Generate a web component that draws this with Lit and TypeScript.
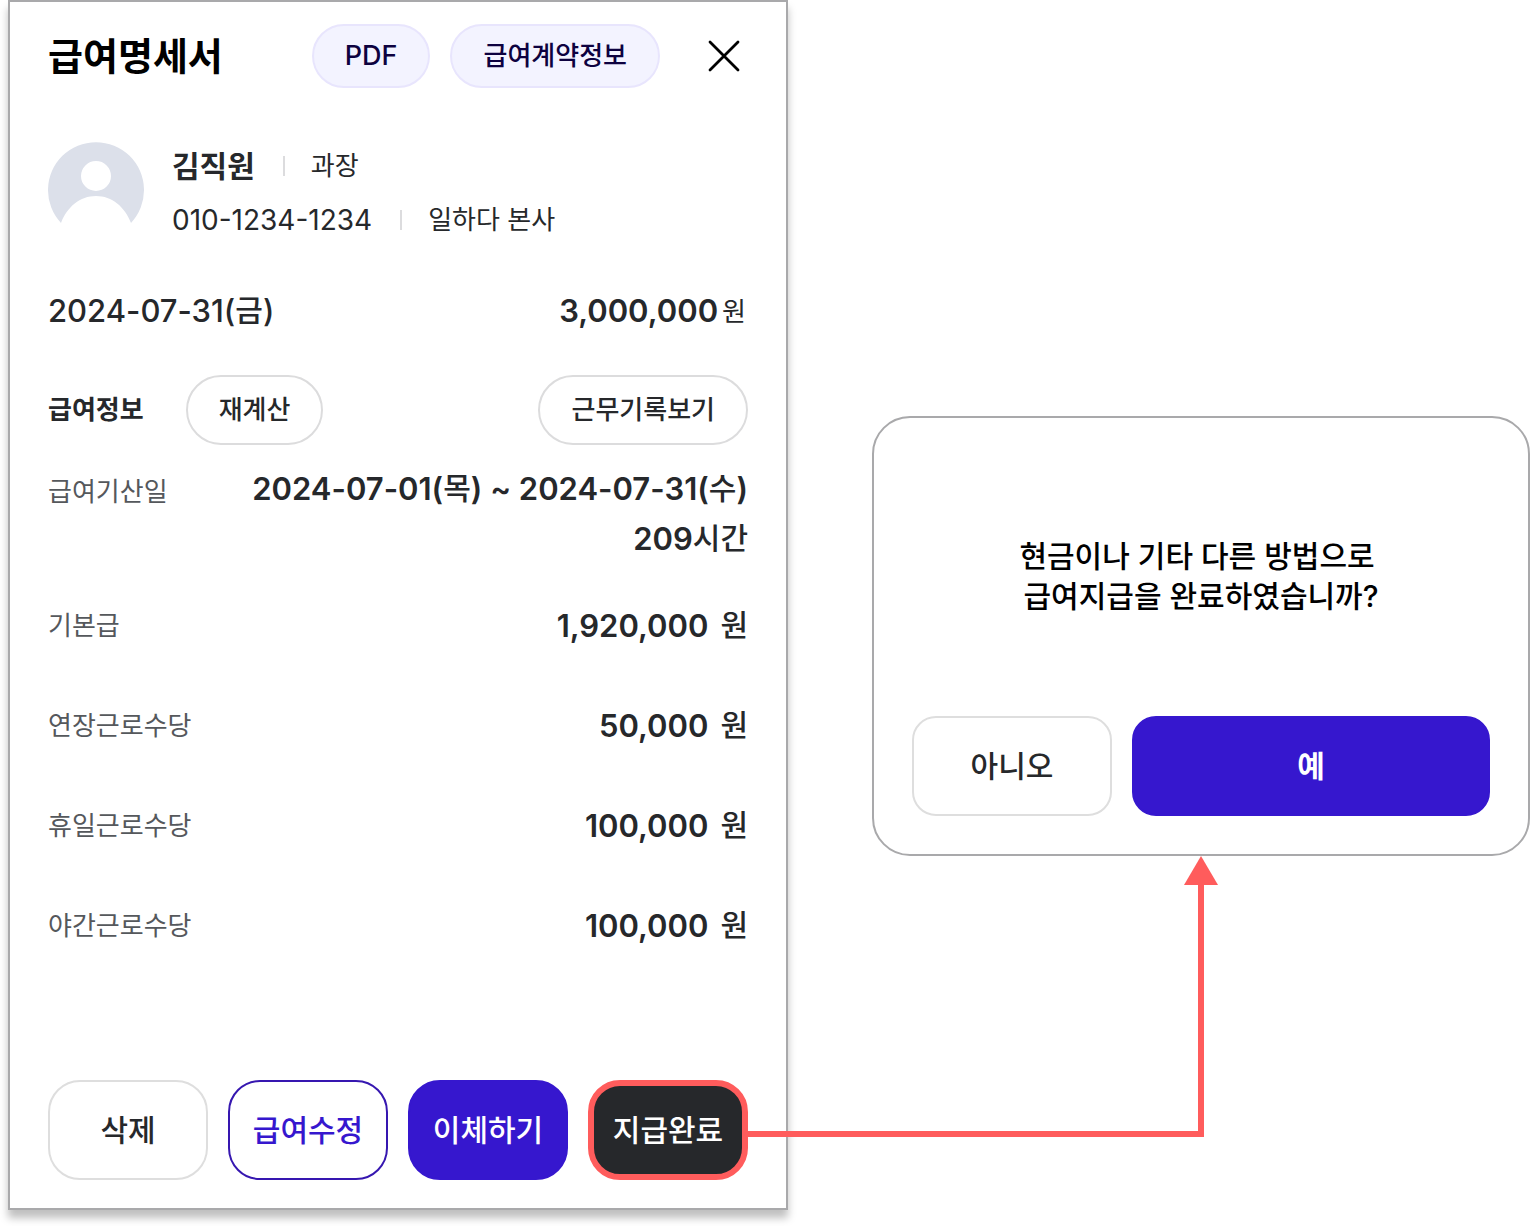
import { LitElement, html, css } from "lit";
import { customElement, property } from "lit/decorators.js";

interface PayItem {
  label: string;
  amount: string;
}

const PAY_ITEMS: PayItem[] = [
  { label: "기본급", amount: "1,920,000" },
  { label: "연장근로수당", amount: "50,000" },
  { label: "휴일근로수당", amount: "100,000" },
  { label: "야간근로수당", amount: "100,000" },
];

const base = css`
  * {
    box-sizing: border-box;
  }
  button {
    margin: 0;
    padding: 0;
    font-family: inherit;
    cursor: pointer;
    white-space: nowrap;
  }
  .ko {
    font-size: 30px;
    line-height: 1;
    vertical-align: 1px;
  }
`;

@customElement("pay-slip")
export class PaySlip extends LitElement {
  @property({ attribute: false }) items: PayItem[] = [];

  static styles = [
    base,
    css`
      :host {
        display: block;
      }
      .panel {
        padding: 22px 38px 28px;
        border: 2px solid #a9a9ab;
        background: #fff;
        box-shadow: 0 8px 8px rgba(0, 0, 0, 0.25);
      }
      .header {
        display: flex;
        align-items: center;
        gap: 20px;
      }
      .title {
        flex: 1;
        margin: 0;
        color: #000;
        font-size: 38px;
        line-height: 64px;
        font-weight: 700;
        white-space: nowrap;
      }
      .chip {
        height: 64px;
        padding: 0 31px;
        border: 2px solid #e8e5fd;
        border-radius: 32px;
        background: #f3f3ff;
        color: #0d0140;
        font-size: 26px;
        line-height: 60px;
        font-weight: 500;
      }
      .latin {
        font-size: 27px;
      }
      .close {
        display: grid;
        place-items: center;
        width: 48px;
        height: 48px;
        margin-left: 20px;
        border: 0;
        background: none;
      }
      .profile {
        display: flex;
        align-items: flex-start;
        gap: 28px;
        margin-top: 51px;
      }
      .avatar {
        display: block;
        flex: none;
        margin-top: 3px;
      }
      .line {
        display: flex;
        align-items: center;
        height: 54px;
        color: #26282b;
        font-size: 26px;
        line-height: 54px;
        white-space: nowrap;
      }
      .name {
        font-size: 30px;
        font-weight: 700;
      }
      .phone {
        font-size: 28px;
      }
      .divider {
        width: 2px;
        height: 20px;
        margin: 0 26px 0 28px;
        background: #dcdcde;
      }
      .total {
        display: flex;
        justify-content: space-between;
        margin-top: 39px;
        color: #26282b;
        font-size: 31px;
        line-height: 50px;
        font-weight: 500;
      }
      .sum {
        font-weight: 600;
      }
      .sum-unit {
        margin: 0 2px 0 4px;
        font-size: 26px;
        line-height: 1;
        font-weight: 400;
        vertical-align: 1px;
      }
      .section {
        display: flex;
        align-items: center;
        margin-top: 39px;
      }
      .section-title {
        margin: 0 42px 0 0;
        color: #26282b;
        font-size: 26px;
        line-height: 70px;
        font-weight: 700;
      }
      .pill {
        height: 70px;
        padding: 0 31px;
        border: 2px solid #dcdcdd;
        border-radius: 35px;
        background: #fff;
        color: #26282b;
        font-size: 26px;
        line-height: 66px;
        font-weight: 500;
      }
      .records {
        margin-left: auto;
      }
      .details {
        display: grid;
        gap: 50px;
        margin: 19px 0 0;
      }
      .row {
        display: flex;
        justify-content: space-between;
      }
      .row dt {
        color: #55585c;
        font-size: 26px;
        line-height: 50px;
        font-weight: 400;
      }
      .row dd {
        margin: 0;
        color: #26282b;
        font-size: 31px;
        line-height: 50px;
        font-weight: 600;
        text-align: right;
        white-space: nowrap;
      }
      .period {
        margin-bottom: -13px;
      }
      .period dt {
        line-height: 56px;
      }
      .row .unit {
        margin-left: 12px;
      }
      .row .ko,
      .total .ko {
        font-weight: 500;
      }
      .actions {
        display: grid;
        grid-template-columns: repeat(4, 1fr);
        gap: 20px;
        margin-top: 129px;
      }
      .action {
        height: 100px;
        padding-bottom: 4px;
        border: 2px solid #dedede;
        border-radius: 32px;
        background: #fff;
        color: #26282b;
        font-size: 30px;
        font-weight: 500;
      }
      .outline {
        border-color: #3617b0;
        color: #3617ce;
      }
      .primary {
        border-color: #3617ce;
        background: #3617ce;
        color: #fff;
      }
      .dark {
        border: 6px solid #ff5c5c;
        background: #26282b;
        color: #fff;
      }
    `,
  ];

  render() {
    return html`
      <section class="panel" aria-labelledby="slip-title">
        <header class="header">
          <h1 class="title" id="slip-title">급여명세서</h1>
          <button class="chip latin" type="button">PDF</button>
          <button class="chip" type="button">급여계약정보</button>
          <button class="close" type="button" aria-label="닫기">
            <svg width="32" height="32" viewBox="0 0 32 32" aria-hidden="true">
              <path d="M2 2 30 30M30 2 2 30" fill="none" stroke="#000" stroke-width="2.8" stroke-linecap="round" />
            </svg>
          </button>
        </header>

        <div class="profile">
          <svg class="avatar" width="96" height="96" viewBox="0 0 96 96" aria-hidden="true">
            <path
              fill="#dce0ea"
              fill-rule="evenodd"
              d="M13 81A48 48 0 1 1 83 81C77 65 64 54 48 54S19 65 13 81ZM48 19a15 15 0 1 0 0 30a15 15 0 1 0 0-30Z"
            />
          </svg>
          <div>
            <div class="line"><span class="name">김직원</span><span class="divider"></span><span>과장</span></div>
            <div class="line">
              <span class="phone">010-1234-1234</span><span class="divider"></span><span>일하다 본사</span>
            </div>
          </div>
        </div>

        <div class="total">
          <span>2024-07-31(<span class="ko">금</span>)</span>
          <span class="sum">3,000,000<span class="sum-unit">원</span></span>
        </div>

        <div class="section">
          <h2 class="section-title">급여정보</h2>
          <button class="pill" type="button">재계산</button>
          <button class="pill records" type="button">근무기록보기</button>
        </div>

        <dl class="details">
          <div class="row period">
            <dt>급여기산일</dt>
            <dd>
              2024-07-01(<span class="ko">목</span>) ~ 2024-07-31(<span class="ko">수</span>)<br />209<span class="ko"
                >시간</span
              >
            </dd>
          </div>
          ${this.items.map(
            (item) => html`
              <div class="row">
                <dt>${item.label}</dt>
                <dd>${item.amount}<span class="ko unit">원</span></dd>
              </div>
            `
          )}
        </dl>

        <div class="actions">
          <button class="action" type="button">삭제</button>
          <button class="action outline" type="button">급여수정</button>
          <button class="action primary" type="button">이체하기</button>
          <button class="action dark" type="button">지급완료</button>
        </div>
      </section>
    `;
  }
}

@customElement("confirm-dialog")
export class ConfirmDialog extends LitElement {
  static styles = [
    base,
    css`
      :host {
        display: block;
      }
      .dialog {
        padding: 118px 38px 38px;
        border: 2px solid #a9a9ab;
        border-radius: 38px;
        background: #fff;
      }
      .message {
        margin: 0;
        color: #000;
        font-size: 30px;
        line-height: 40px;
        font-weight: 500;
        text-align: center;
      }
      .choices {
        display: grid;
        grid-template-columns: 200fr 358fr;
        gap: 20px;
        margin-top: 100px;
      }
      .choice {
        height: 100px;
        padding-bottom: 4px;
        border: 2px solid #dedede;
        border-radius: 24px;
        background: #fff;
        color: #26282b;
        font-size: 30px;
        font-weight: 500;
      }
      .yes {
        border-color: #3617ce;
        background: #3617ce;
        color: #fff;
        font-weight: 700;
      }
    `,
  ];

  render() {
    return html`
      <div class="dialog" role="dialog" aria-labelledby="message">
        <p class="message" id="message">현금이나 기타 다른 방법으로&nbsp;<br />급여지급을 완료하였습니까?</p>
        <div class="choices">
          <button class="choice" type="button">아니오</button>
          <button class="choice yes" type="button">예</button>
        </div>
      </div>
    `;
  }
}

@customElement("app-root")
export class AppRoot extends LitElement {
  static styles = [
    base,
    css`
      :host {
        display: block;
        background: #fff;
        font-family: Inter, "Noto Sans CJK KR", sans-serif;
      }
      .stage {
        display: grid;
        grid-template-columns: 780fr 658fr;
        column-gap: 84px;
        padding: 0 0 16px 8px;
      }
      .flow {
        display: flex;
        flex-direction: column;
        padding: 416px 0 73px;
      }
      /* Runs from the right edge of the last action to the middle of the dialog. */
      .connector {
        z-index: 1;
        flex: 1;
        display: flex;
        flex-direction: column;
        width: calc(50% + 141px);
        margin-left: -124px;
        pointer-events: none;
      }
      .head {
        display: block;
        align-self: flex-end;
      }
      .elbow {
        flex: 1;
        margin-right: 14px;
        border: solid #ff5c5c;
        border-width: 0 6px 6px 0;
      }
    `,
  ];

  render() {
    return html`
      <main class="stage">
        <pay-slip .items=${PAY_ITEMS}></pay-slip>
        <div class="flow">
          <confirm-dialog></confirm-dialog>
          <div class="connector">
            <svg class="head" width="34" height="29" viewBox="0 0 34 29" aria-hidden="true">
              <path d="M17 0 34 29H0Z" fill="#ff5c5c" />
            </svg>
            <div class="elbow"></div>
          </div>
        </div>
      </main>
    `;
  }
}
